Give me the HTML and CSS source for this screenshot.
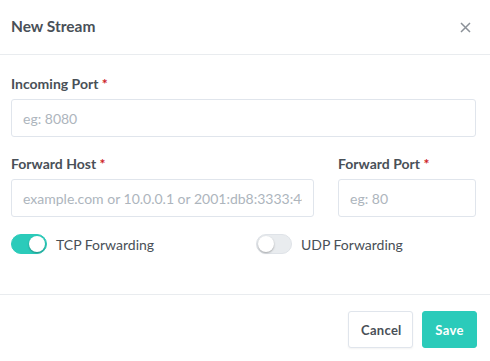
FILE: index.html
```html
<!DOCTYPE html>
<html>
<head>
<meta charset="utf-8">
<link rel="stylesheet" href="styles.css">
</head>
<body>
<div class="modal">
  <div class="modal-header">
    <h5 class="modal-title">New Stream</h5>
    <button class="close" aria-label="Close">
      <svg width="11" height="11" viewBox="0 0 11 11"><path d="M1 1L10 10M10 1L1 10" stroke="#8b9198" stroke-width="1.5" fill="none"/></svg>
    </button>
  </div>
  <div class="modal-body">
    <div class="form-group">
      <label class="form-label">Incoming Port <span class="req">*</span></label>
      <input class="form-control" placeholder="eg: 8080">
    </div>
    <div class="row">
      <div class="form-group col-host">
        <label class="form-label">Forward Host <span class="req">*</span></label>
        <input class="form-control" placeholder="example.com or 10.0.0.1 or 2001:db8:3333:4444:5555:6666:7777:8888">
      </div>
      <div class="form-group col-port">
        <label class="form-label">Forward Port <span class="req">*</span></label>
        <input class="form-control" placeholder="eg: 80">
      </div>
    </div>
    <div class="row toggles">
      <label class="switch col-host">
        <span class="track on"><span class="knob"></span></span>
        <span class="switch-label">TCP Forwarding</span>
      </label>
      <label class="switch col-udp">
        <span class="track"><span class="knob"></span></span>
        <span class="switch-label">UDP Forwarding</span>
      </label>
    </div>
  </div>
  <div class="modal-footer">
    <button class="btn btn-secondary">Cancel</button>
    <button class="btn btn-teal">Save</button>
  </div>
</div>
</body>
</html>
```
FILE: styles.css
```css
html, body {
  margin: 0;
  padding: 0;
  background: #fff;
}
body {
  font-family: "Lato", "Open Sans", sans-serif;
  font-size: 14px;
  color: #495057;
  width: 490px;
  height: 361px;
  overflow: hidden;
}
.modal {
  width: 490px;
}
.modal-header {
  height: 54px;
  border-bottom: 1px solid #e9ecef;
  display: flex;
  align-items: center;
  justify-content: space-between;
  padding: 0 19px 0 11px;
}
.modal-title {
  margin: 0;
  font-size: 15.5px;
  font-weight: 700;
  color: #495057;
  line-height: 1;
  padding-bottom: 1px;
}
.close {
  background: none;
  border: 0;
  padding: 0;
  width: 11px;
  height: 11px;
  display: flex;
}
.modal-body {
  padding: 18px 14px 39px 11px;
}
.form-group {
  margin-bottom: 16px;
}
.form-label {
  display: block;
  font-weight: 700;
  font-size: 14px;
  line-height: 21px;
  margin-bottom: 5px;
  color: #495057;
}
.req {
  color: #cd201f;
}
.form-control {
  box-sizing: border-box;
  display: block;
  width: 100%;
  height: 38px;
  padding: 6px 11px;
  font-family: inherit;
  font-size: 14px;
  color: #495057;
  border: 1px solid #e0e5ec;
  border-radius: 3px;
  background: #fff;
  outline: none;
}
.form-control::placeholder {
  color: #adb5bd;
}
.row {
  display: flex;
  gap: 24px;
}
.col-host {
  width: 303px;
  flex: none;
}
.col-port {
  flex: 1;
  min-width: 0;
}
.toggles {
  gap: 0;
  height: 22px;
  align-items: center;
}
.col-host.switch {
  width: 245px;
}
.switch {
  display: flex;
  align-items: center;
  gap: 9px;
}
.track {
  position: relative;
  box-sizing: border-box;
  width: 36px;
  height: 20px;
  border-radius: 10px;
  background: #e9ecef;
  border: 1px solid #dfe3e8;
  flex: none;
}
.track.on {
  background: #2bcbba;
  border-color: #2bcbba;
}
.knob {
  position: absolute;
  top: 1px;
  left: 1px;
  width: 16px;
  height: 16px;
  border-radius: 50%;
  background: #fff;
  box-shadow: 0 1px 2px rgba(0, 0, 0, 0.3);
}
.track.on .knob {
  left: 17px;
}
.switch-label {
  font-size: 14px;
  color: #495057;
  line-height: 21px;
}
.modal-footer {
  border-top: 1px solid #e9ecef;
  display: flex;
  justify-content: flex-end;
  gap: 9px;
  padding: 16px 13px 0 0;
}
.btn {
  box-sizing: border-box;
  height: 37px;
  border-radius: 3px;
  font-family: inherit;
  font-size: 13px;
  font-weight: 700;
  padding: 0 12px;
  letter-spacing: 0.3px;
}
.btn-secondary {
  width: 65px;
  background: #fff;
  color: #495057;
  border: 1px solid #e0e5ec;
  box-shadow: 0 1px 2px rgba(0, 0, 0, 0.05);
}
.btn-teal {
  width: 55px;
  background: #2bcbba;
  color: #fff;
  border: 1px solid #2bcbba;
}
```
